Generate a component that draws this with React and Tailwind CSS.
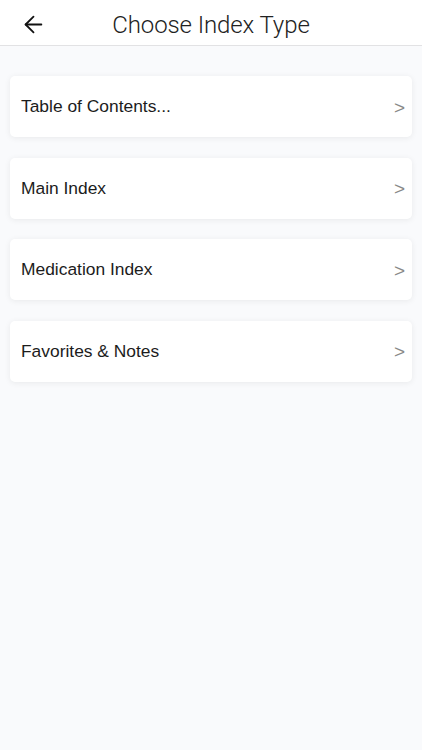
import { ArrowLeft } from "lucide-react";

const items = ["Table of Contents...", "Main Index", "Medication Index", "Favorites & Notes"];

function App() {
    return (
        <div className="min-h-screen bg-[#f9fafc] font-['Liberation_Sans',sans-serif]">
            {/* header */}
            <div className="h-[46px] bg-white border-b border-[#e2e2e4] flex items-center relative pt-[4px]">
                <button className="absolute left-[20px] top-[11px] text-[#111]">
                    <ArrowLeft size={27} strokeWidth={1.6} />
                </button>
                <h1 className="w-full text-center text-[24px] font-light text-[#222] font-['Roboto',sans-serif] tracking-[-0.1px]">
                    Choose Index Type
                </h1>
            </div>

            {/* list */}
            <div className="px-[10px] pt-[30px] flex flex-col gap-[20.5px]">
                {items.map((label) => (
                    <div
                        key={label}
                        className="h-[61px] bg-white rounded-[5px] shadow-[0_1px_6px_rgba(0,0,0,0.07)] flex items-center justify-between pl-[11px] pr-[7px]"
                    >
                        <span className="text-[17.4px] text-[#1c1c1c]">{label}</span>
                        <span className="text-[19px] text-[#888] font-light pt-[3px]">&gt;</span>
                    </div>
                ))}
            </div>
        </div>
    );
}

export default App;
